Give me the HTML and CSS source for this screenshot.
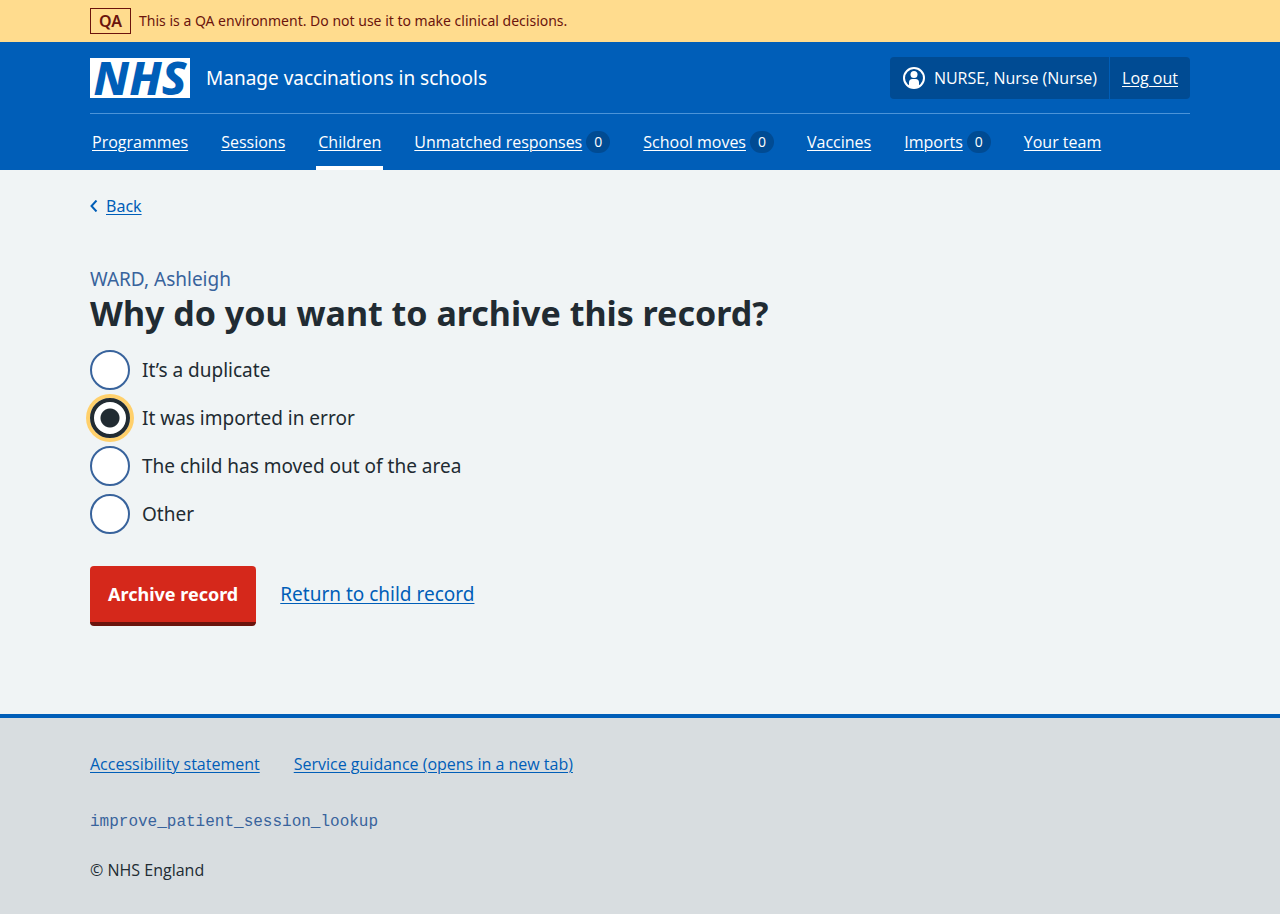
FILE: index.html
```html
<!DOCTYPE html>
<html lang="en">
<head>
<meta charset="utf-8">
<meta name="viewport" content="width=device-width, initial-scale=1">
<title>Why do you want to archive this record?</title>
<link rel="stylesheet" href="styles.css">
</head>
<body>
<div class="environment">
  <div class="container environment-inner">
    <strong class="environment-tag">QA</strong>
    <span>This is a QA environment. Do not use it to make clinical decisions.</span>
  </div>
</div>
<header class="header">
  <div class="container">
    <div class="header-top">
      <a class="service" href="#">
        <span class="logo">NHS</span>
        <span>Manage vaccinations in schools</span>
      </a>
      <div class="account">
        <span class="account-item">
          <svg class="account-icon" viewBox="0 0 24 24" width="24" height="24" aria-hidden="true">
            <circle cx="12" cy="12" r="10" fill="none" stroke="#fff" stroke-width="2"/>
            <circle cx="12" cy="8.500" r="3.500" fill="#fff"/>
            <path d="M7 20v-3.500a3.500 3.500 0 0 1 3.500-3.500h3a3.500 3.500 0 0 1 3.500 3.500V20q-2 2-5 2t-5-2z" fill="#fff"/>
          </svg>
          <span>NURSE, Nurse (Nurse)</span>
        </span>
        <a class="account-item account-link" href="#">Log out</a>
      </div>
    </div>
    <nav class="nav" aria-label="Menu">
      <div class="nav-item"><a href="#">Programmes</a></div>
      <div class="nav-item"><a href="#">Sessions</a></div>
      <div class="nav-item nav-item-current"><a href="#" aria-current="true">Children</a></div>
      <div class="nav-item"><a href="#">Unmatched responses</a><span class="count">0</span></div>
      <div class="nav-item"><a href="#">School moves</a><span class="count">0</span></div>
      <div class="nav-item"><a href="#">Vaccines</a></div>
      <div class="nav-item"><a href="#">Imports</a><span class="count">0</span></div>
      <div class="nav-item"><a href="#">Your team</a></div>
    </nav>
  </div>
</header>
<main class="container main">
  <div class="back">
    <svg viewBox="0 0 8 12" width="8" height="12" aria-hidden="true"><path d="M6.500 .5L1.500 6l5 5.500" fill="none" stroke="#005eb8" stroke-width="2"/></svg>
    <a href="#">Back</a>
  </div>
  <form>
    <fieldset class="fieldset">
      <legend class="legend">
        <span class="caption">WARD, Ashleigh</span>
        <h1 class="heading">Why do you want to archive this record?</h1>
      </legend>
      <div class="radios">
        <div class="radio"><input type="radio" name="reason" id="reason-1"><label for="reason-1">It’s a duplicate</label></div>
        <div class="radio"><input type="radio" name="reason" id="reason-2" checked autofocus><label for="reason-2">It was imported in error</label></div>
        <div class="radio"><input type="radio" name="reason" id="reason-3"><label for="reason-3">The child has moved out of the area</label></div>
        <div class="radio"><input type="radio" name="reason" id="reason-4"><label for="reason-4">Other</label></div>
      </div>
    </fieldset>
    <div class="actions">
      <button class="button" type="button">Archive record</button>
      <a href="#">Return to child record</a>
    </div>
  </form>
</main>
<footer class="footer">
  <div class="container footer-inner">
    <div class="footer-links">
      <a href="#">Accessibility statement</a>
      <a href="#">Service guidance (opens in a new tab)</a>
    </div>
    <code class="branch">improve_patient_session_lookup</code>
    <p class="copyright">© NHS England</p>
  </div>
</footer>
</body>
</html>
```
FILE: styles.css
```css
* { box-sizing: border-box; }
body {
  margin: 0;
  min-height: 100vh;
  display: flex;
  flex-direction: column;
  background: #f0f4f5;
  color: #212b32;
  font: 19px/28px "Noto Sans", "Open Sans", sans-serif;
}
a { color: #005eb8; text-decoration-thickness: 1px; text-underline-offset: 2px; }
.container { width: calc(100% - 64px); max-width: 1100px; margin: 0 auto; }

.environment { background: #ffdc8e; color: #6b140d; font-size: 14px; line-height: 24px; }
.environment-inner { display: flex; align-items: center; gap: 8px; padding: 8px 0; }
.environment-tag { border: 1px solid #6b140d; padding: 0 8px; font-size: 16px; font-weight: 600; }

.header { background: #005eb8; color: #fff; }
.header a { color: #fff; }
.header-top { display: flex; justify-content: space-between; align-items: center; padding: 15px 0 14px; border-bottom: 1px solid #4c94d8; }
.header .service { display: flex; align-items: center; gap: 16px; text-decoration: none; }
.logo { width: 100px; height: 40px; background: #fff; color: #005eb8; font-size: 46px; line-height: 38px; font-weight: 800; font-style: italic; text-align: center; }
.account { display: flex; background: #004b93; border-radius: 4px; font: 16px/24px "Open Sans", sans-serif; }
.account-item { display: flex; align-items: center; gap: 8px; padding: 9px 12px; }
.account-link { border-left: 1px solid #005eb8; }
.nav { display: flex; flex-wrap: wrap; gap: 0 29px; font: 16px/24px "Open Sans", sans-serif; }
.nav-item { display: flex; align-items: center; gap: 4px; padding: 16px 2px 12px; border-bottom: 4px solid transparent; }
.nav-item-current { border-bottom-color: #fff; }
.count { min-width: 24px; height: 22px; border-radius: 12px; background: #004b93; font-size: 14px; line-height: 22px; text-align: center; }

.main { flex: 1; padding: 24px 0 88px; }
.back { display: flex; align-items: center; gap: 8px; font-size: 16px; line-height: 24px; margin-bottom: 47px; }
.fieldset { border: 0; margin: 0; padding: 0; min-width: 0; }
.legend { padding: 0; margin-bottom: 17px; }
.caption { display: block; color: #38639c; }
.heading { margin: 0; font-size: 34px; line-height: 40px; font-weight: 700; }
.radios { display: flex; flex-direction: column; gap: 8px; }
.radio { display: flex; align-items: center; gap: 12px; }
.radio input { appearance: none; width: 40px; height: 40px; margin: 0; border: 2px solid #38639c; border-radius: 50%; background: #fff; flex: none; }
.radio input:checked { background: radial-gradient(circle, #212b32 9px, #fff 10px); }
.radio input:focus { outline: 0; border: 4px solid #212b32; box-shadow: 0 0 0 4px #ffd06b; }
.actions { display: flex; flex-wrap: wrap; align-items: baseline; gap: 24px; margin-top: 32px; }
.button { border: 0; border-bottom: 4px solid #6b140d; border-radius: 4px; background: #d5281b; color: #fff; padding: 14px 18px; font: 700 18px/28px "Noto Sans", "Open Sans", sans-serif; }

.footer { background: #d8dde0; border-top: 4px solid #005eb8; font: 16px/24px "Open Sans", sans-serif; }
.footer-inner { display: flex; flex-direction: column; padding: 34px 0 32px; }
.footer-links { display: flex; flex-wrap: wrap; gap: 8px 34px; }
.branch { margin: 34px 0 24px; color: #38639c; font: 16px/24px "Liberation Mono", monospace; }
.copyright { margin: 0; }
```
